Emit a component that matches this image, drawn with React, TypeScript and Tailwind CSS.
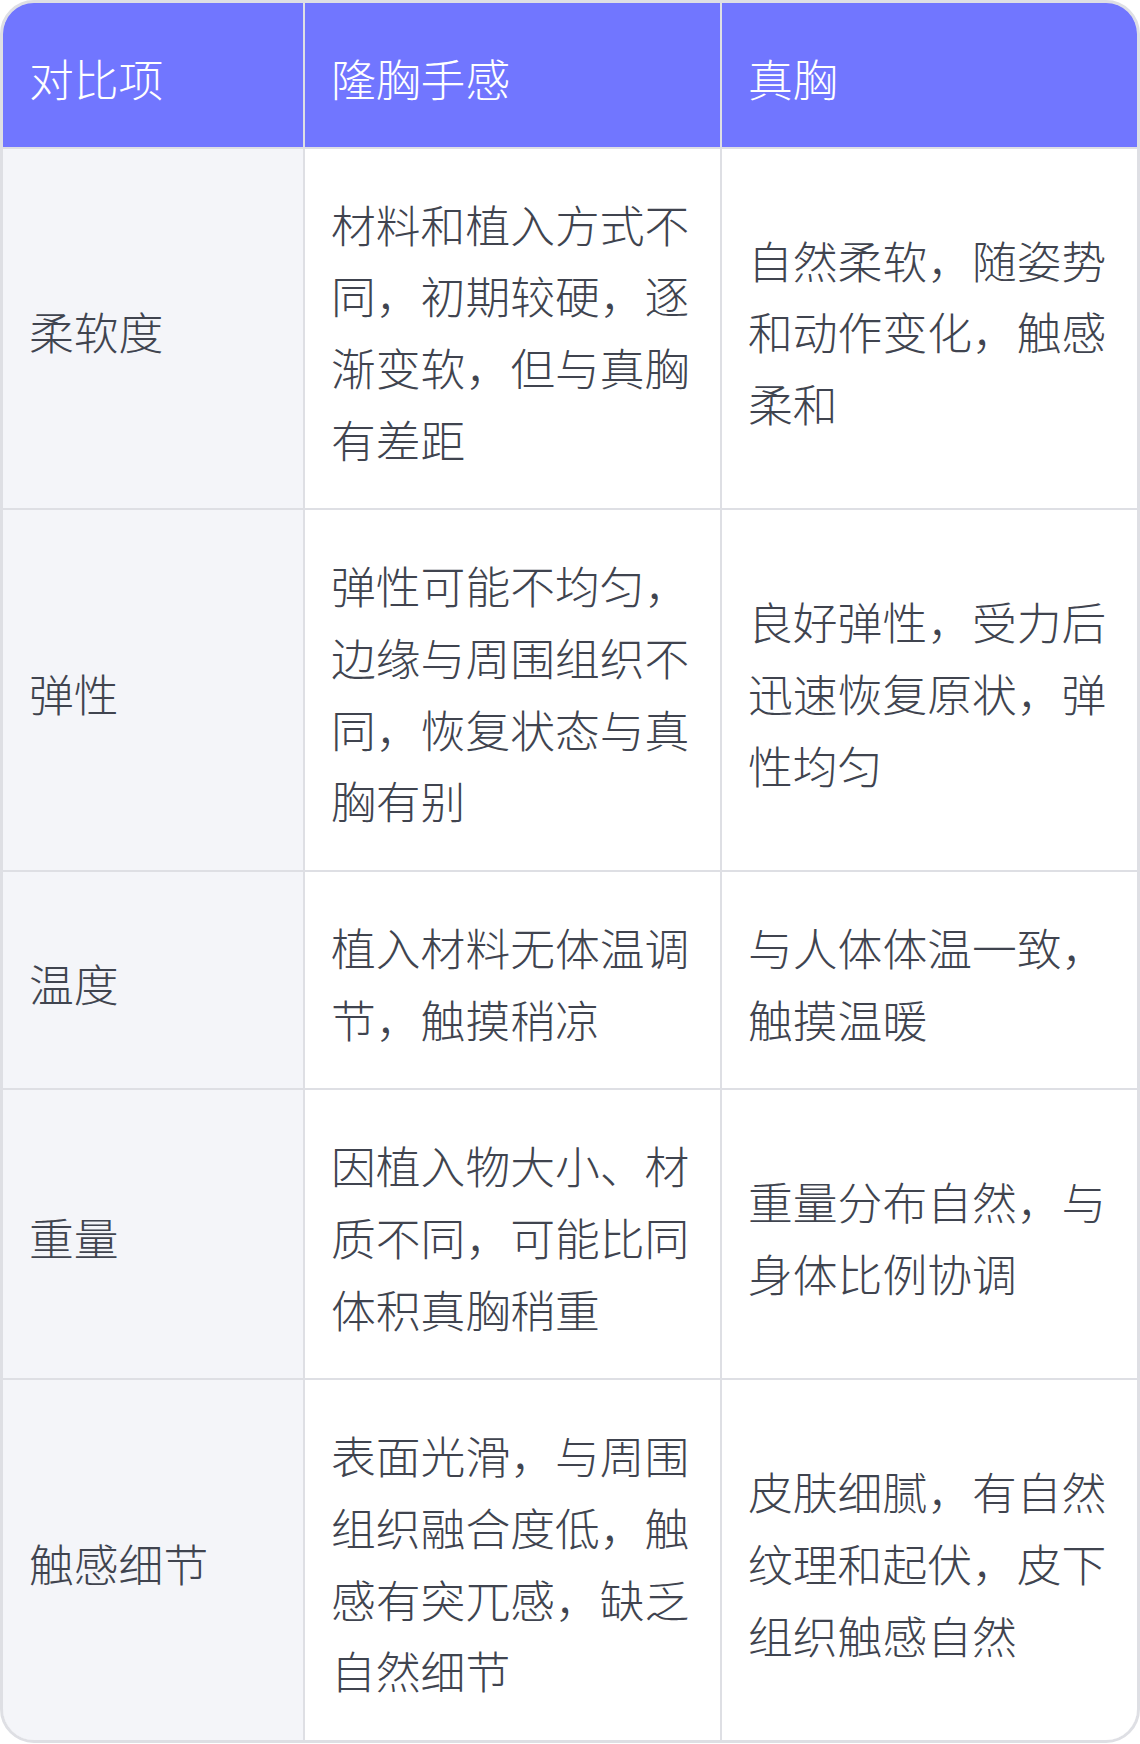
import React from "react";

const rows: [string, string, string][] = [
  ["柔软度", "材料和植入方式不同，初期较硬，逐渐变软，但与真胸有差距", "自然柔软，随姿势和动作变化，触感柔和"],
  ["弹性", "弹性可能不均匀，边缘与周围组织不同，恢复状态与真胸有别", "良好弹性，受力后迅速恢复原状，弹性均匀"],
  ["温度", "植入材料无体温调节，触摸稍凉", "与人体体温一致，触摸温暖"],
  ["重量", "因植入物大小、材质不同，可能比同体积真胸稍重", "重量分布自然，与身体比例协调"],
  ["触感细节", "表面光滑，与周围组织融合度低，触感有突兀感，缺乏自然细节", "皮肤细腻，有自然纹理和起伏，皮下组织触感自然"],
];

const font = { fontFamily: '"Noto Sans CJK SC", "Noto Sans", sans-serif' };

export default function App() {
  return (
    <div className="w-[1140px] bg-white" style={font}>
      <div className="border-[3px] border-[#dedfe4] rounded-[34px] overflow-hidden">
        <div className="grid grid-cols-[300px_415px_415px] gap-[2px] bg-[#dedfe4] text-[44.8px] leading-[1.6] font-light">
          {["对比项", "隆胸手感", "真胸"].map((h) => (
            <div key={h} className="bg-[#7176ff] text-white pl-[26px] pr-[28px] pt-[38.5px] pb-[33.5px] flex items-center">
              {h}
            </div>
          ))}
          {rows.map((r) => (
            <React.Fragment key={r[0]}>
              <div className="bg-[#f4f5f9] text-[#40444f] pl-[26px] pr-[28px] pt-[39px] pb-[34px] flex items-center">{r[0]}</div>
              <div className="bg-white text-[#40444f] pl-[26px] pr-[28px] pt-[39px] pb-[34px] flex items-center">{r[1]}</div>
              <div className="bg-white text-[#40444f] pl-[26px] pr-[28px] pt-[39px] pb-[34px] flex items-center">{r[2]}</div>
            </React.Fragment>
          ))}
        </div>
      </div>
    </div>
  );
}
